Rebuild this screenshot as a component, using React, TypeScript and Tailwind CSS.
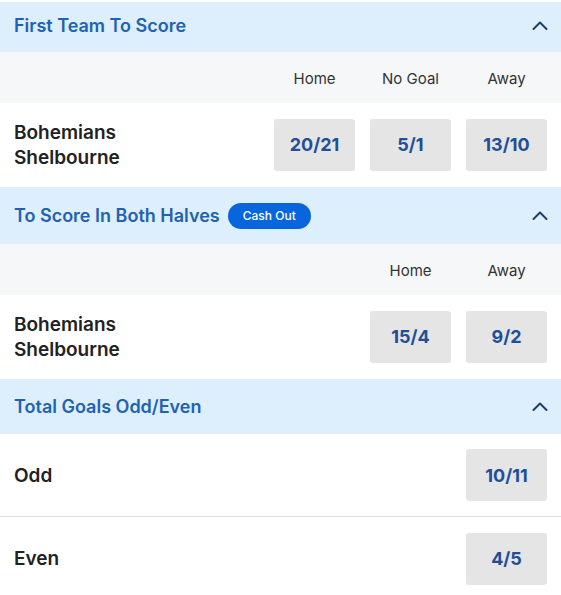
import React from "react";

type Market = {
  title: string;
  cashOut?: boolean;
  headerH: string;
  columns?: string[];
  rows: { label: string[]; odds: string[] }[];
};

const markets: Market[] = [
  {
    title: "First Team To Score",
    headerH: "h-[50px] pb-[3px]",
    columns: ["Home", "No Goal", "Away"],
    rows: [{ label: ["Bohemians", "Shelbourne"], odds: ["20/21", "5/1", "13/10"] }],
  },
  {
    title: "To Score In Both Halves",
    cashOut: true,
    headerH: "h-[57px]",
    columns: ["Home", "Away"],
    rows: [{ label: ["Bohemians", "Shelbourne"], odds: ["15/4", "9/2"] }],
  },
  {
    title: "Total Goals Odd/Even",
    headerH: "h-[55px]",
    rows: [
      { label: ["Odd"], odds: ["10/11"] },
      { label: ["Even"], odds: ["4/5"] },
    ],
  },
];

function Chevron() {
  return (
    <svg width="18" height="18" viewBox="0 0 18 18" fill="none">
      <polyline
        points="2.5,12 9,5.5 15.5,12"
        stroke="#1d3d6b"
        strokeWidth="2"
        strokeLinecap="round"
        strokeLinejoin="round"
      />
    </svg>
  );
}

function OddsButton({ value }: { value: string }) {
  return (
    <div className="w-[81px] h-[52px] rounded-[3px] bg-[#e5e5e5] flex items-center justify-center text-[18px] font-bold text-[#1f4f97]">
      {value}
    </div>
  );
}

export default function App() {
  return (
    <div className="w-[561px] h-[595px] overflow-hidden bg-white pt-[2px] font-['Inter',sans-serif]">
      {markets.map((m, i) => (
        <div key={m.title} className={i > 0 ? "mt-px" : ""}>
          <div
            className={`${m.headerH} bg-[#ddeefc] flex items-center justify-between pl-[14px] pr-[12px]`}
          >
            <div className="flex items-center gap-[8px]">
              <span className="text-[18px] font-semibold text-[#1f62b1]">{m.title}</span>
              {m.cashOut && (
                <span className="h-[26px] px-[15px] rounded-full bg-[#0866dc] text-white text-[12px] font-medium flex items-center">
                  Cash Out
                </span>
              )}
            </div>
            <Chevron />
          </div>

          {m.columns && (
            <div className="h-[51px] bg-[#f6f7f9] flex items-center justify-end gap-[15px] pr-[14px] pt-[3px]">
              {m.columns.map((c) => (
                <div key={c} className="w-[81px] text-center text-[15px] text-[#333]">
                  {c}
                </div>
              ))}
            </div>
          )}

          {m.rows.map((r, j) => (
            <div
              key={r.label.join()}
              className={`h-[83px] flex items-center justify-between pl-[14px] pr-[14px] ${
                !m.columns && j < m.rows.length - 1 ? "border-b border-[#dedede]" : ""
              }`}
            >
              <div className="text-[19px] font-semibold leading-[25px] text-[#222]">
                {r.label.map((l) => (
                  <div key={l}>{l}</div>
                ))}
              </div>
              <div className="flex gap-[15px]">
                {r.odds.map((o) => (
                  <OddsButton key={o} value={o} />
                ))}
              </div>
            </div>
          ))}
        </div>
      ))}
    </div>
  );
}
